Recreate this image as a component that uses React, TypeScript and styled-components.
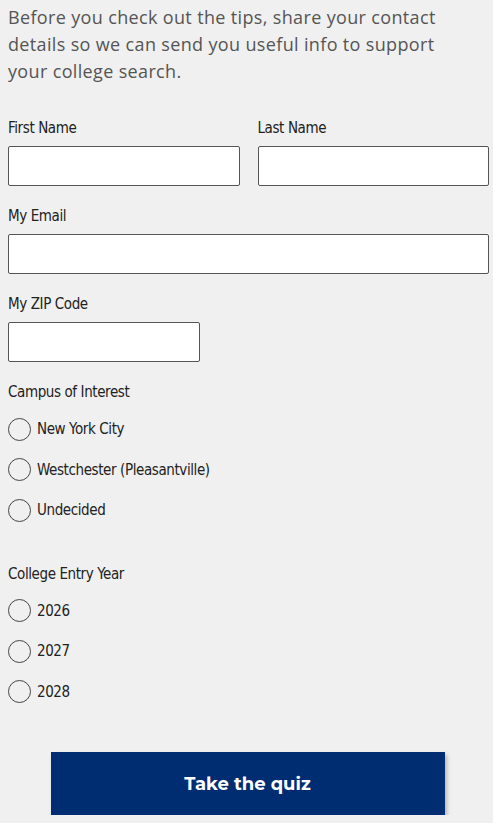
import React from "react";
import styled, { createGlobalStyle } from "styled-components";

const GlobalStyle = createGlobalStyle`
  html, body {
    margin: 0;
    padding: 0;
    background: #f0f0f0;
  }
  * {
    box-sizing: border-box;
  }
`;

const Page = styled.div`
  padding: 4px 4px 0 8px;
  font-family: "DejaVu Sans", "Roboto", sans-serif;
  font-stretch: condensed;
  letter-spacing: -0.4px;
  color: #222;
`;

const Intro = styled.p`
  margin: 0 0 33px;
  font-family: "Open Sans", "Liberation Sans", sans-serif;
  font-stretch: normal;
  font-size: 18px;
  letter-spacing: 0.35px;
  line-height: 27px;
  color: #555;
  max-width: 462px;
`;

const Row = styled.div`
  display: flex;
  gap: 18px;
`;

const Field = styled.div<{ $width?: string }>`
  display: flex;
  flex-direction: column;
  width: ${({ $width }) => $width || "100%"};
  margin-bottom: 20px;
`;

const Label = styled.label`
  font-size: 15px;
  line-height: 20px;
  margin-bottom: 8px;
  color: #222;
`;

const Input = styled.input`
  height: 40px;
  width: 100%;
  border: 1px solid #555;
  border-radius: 2px;
  background: #fff;
  font-size: 16px;
  padding: 0 8px;
`;

const Group = styled.fieldset<{ $gap?: number }>`
  border: 0;
  margin: 0 0 ${({ $gap }) => $gap ?? 0}px;
  padding: 0;
`;

const Legend = styled.div`
  font-size: 15px;
  line-height: 20px;
  margin-bottom: 7px;
  color: #222;
`;

const Option = styled.label`
  display: flex;
  align-items: center;
  gap: 6px;
  height: 40.5px;
  font-size: 15px;
  color: #222;
  cursor: pointer;
`;

const Circle = styled.span`
  width: 23px;
  height: 23px;
  border-radius: 50%;
  border: 1px solid #444;
  background: transparent;
  flex-shrink: 0;
`;

const HiddenRadio = styled.input`
  display: none;
`;

const ButtonWrap = styled.div`
  display: flex;
  justify-content: center;
  padding: 0 40px 0 38px;
`;

const Submit = styled.button`
  width: 394px;
  height: 63px;
  border: 0;
  background: #002d72;
  color: #fff;
  font-family: "Montserrat", "Open Sans", "Liberation Sans", sans-serif;
  font-weight: 700;
  font-size: 18px;
  letter-spacing: 0;
  box-shadow: 2px 3px 4px rgba(0, 0, 0, 0.25);
  cursor: pointer;
`;

const campuses = ["New York City", "Westchester (Pleasantville)", "Undecided"];
const years = ["2026", "2027", "2028"];

const RadioOption = ({ name, value }: { name: string; value: string }) => (
  <Option>
    <HiddenRadio type="radio" name={name} value={value} />
    <Circle />
    {value}
  </Option>
);

export default function App() {
  return (
    <>
      <GlobalStyle />
      <Page>
        <Intro>
          Before you check out the tips, share your contact details so we can
          send you useful info to support your college search.
        </Intro>
        <Row>
          <Field>
            <Label>First Name</Label>
            <Input />
          </Field>
          <Field>
            <Label>Last Name</Label>
            <Input />
          </Field>
        </Row>
        <Field>
          <Label>My Email</Label>
          <Input type="email" />
        </Field>
        <Field $width="192px">
          <Label>My ZIP Code</Label>
          <Input />
        </Field>
        <Group $gap={33}>
          <Legend>Campus of Interest</Legend>
          {campuses.map((c) => (
            <RadioOption key={c} name="campus" value={c} />
          ))}
        </Group>
        <Group $gap={40}>
          <Legend>College Entry Year</Legend>
          {years.map((y) => (
            <RadioOption key={y} name="year" value={y} />
          ))}
        </Group>
        <ButtonWrap>
          <Submit>Take the quiz</Submit>
        </ButtonWrap>
      </Page>
    </>
  );
}
